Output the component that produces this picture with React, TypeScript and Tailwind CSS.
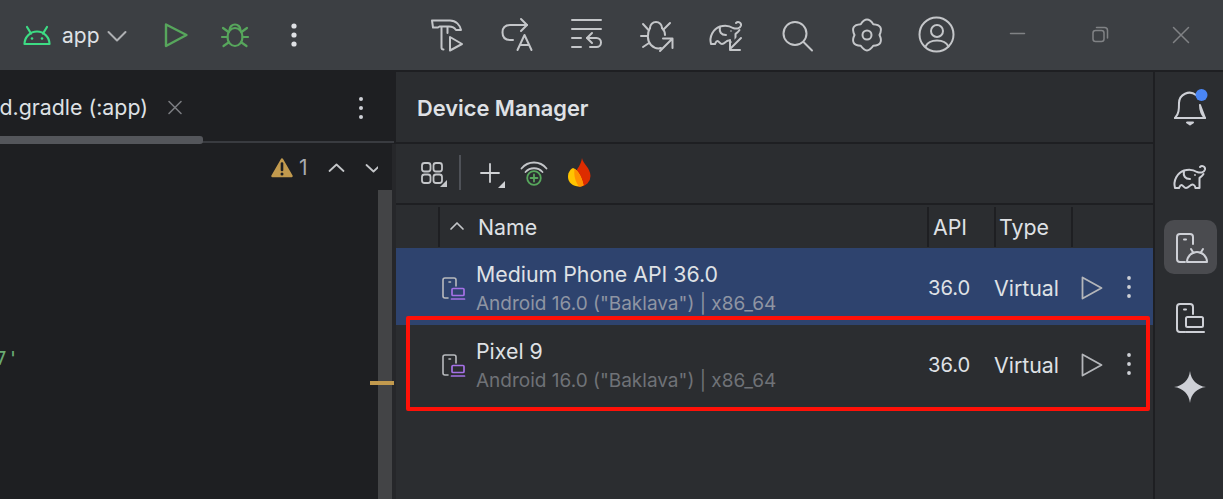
import React from "react";

const Svg = ({ children, stroke = "#c4c6c9", sw = 2, className = "" }: { children: React.ReactNode; stroke?: string; sw?: number; className?: string }) => (
  <svg width="36" height="36" viewBox="0 0 36 36" fill="none" stroke={stroke} strokeWidth={sw} strokeLinecap="round" strokeLinejoin="round" className={"block shrink-0 overflow-visible " + className}>
    {children}
  </svg>
);

const ELEPHANT = "M2 24C0 17 4 9 11 6.5C16 5 21 6 24 8C27 9 31 9 32 5.5C32.5 2.500 29 1 27 3M30.500 10C29 12.500 27.500 13 26.500 14V24H22.500C22 21 20 20 18 21C16.500 22 15 24 13 24C11 24 10 21 8.500 21C7 21 6.500 23 6 24H2M11 7C10 12 12 15 17 15";

const Dots = ({ fill = "#ced0d6", r = 2.3, gap = 9 }: { fill?: string; r?: number; gap?: number }) => (
  <Svg stroke="none">
    <circle cx="18" cy={18 - gap} r={r} fill={fill} />
    <circle cx="18" cy="18" r={r} fill={fill} />
    <circle cx="18" cy={18 + gap} r={r} fill={fill} />
  </Svg>
);

const PlayOutline = ({ color = "#b4b6ba" }: { color?: string }) => (
  <Svg stroke={color} sw={1.8}>
    <path d="M8.500 7.500L27.500 18L8.500 28.500Z" />
  </Svg>
);

const PhoneBody = () => (
  <>
    <path d="M13 33H8A3 3 0 0 1 5 30V8A3 3 0 0 1 8 5H18A3 3 0 0 1 21 8V15" />
    <path d="M12 10.500H14" />
  </>
);

const RowDeviceIcon = () => (
  <svg width="24" height="24" viewBox="0 0 24 24" fill="none" strokeLinecap="round" strokeLinejoin="round" className="block shrink-0">
    <path d="M6 21H3A2 2 0 0 1 1 19V3A2 2 0 0 1 3 1H12A2 2 0 0 1 14 3V9" stroke="#b8babd" strokeWidth="1.600" />
    <path d="M7 5H8.500" stroke="#b8babd" strokeWidth="1.600" />
    <rect x="10" y="11.500" width="12" height="7" rx="1" stroke="#a571e6" strokeWidth="1.700" />
    <path d="M9.500 22H22.500" stroke="#a571e6" strokeWidth="1.700" />
  </svg>
);

const DeviceRow = ({ name, selected }: { name: string; selected?: boolean }) => (
  <div className={"flex h-[77px] items-center " + (selected ? "bg-[#2e436e]" : "")}>
    <div className="ml-[46px] mt-[4px] w-[34px]">
      <RowDeviceIcon />
    </div>
    <div className="flex w-[452px] flex-col pt-[4px]">
      <span className="text-[21.330px] leading-[26px] text-[#dfe1e5]">{name}</span>
      <span className={"mt-[5px] text-[19px] leading-[24px] " + (selected ? "text-[#8f95a3]" : "text-[#6f7277]")}>
        Android 16.0 ("Baklava") | x86_64
      </span>
    </div>
    <span className="mt-[4px] w-[66px] text-[20.200px] text-[#dfe1e5]">36.0</span>
    <span className="mt-[4px] w-[80px] text-[21.330px] text-[#dfe1e5]">Virtual</span>
    <div className="mt-[2px]">
      <PlayOutline />
    </div>
    <div className="ml-[1px]">
      <Dots r={1.900} />
    </div>
  </div>
);

const HeaderSep = () => <div className="h-[40px] w-[2px] shrink-0 bg-[#1e1f22]" />;

export default function App() {
  return (
    <div className="relative flex h-[499px] w-[1223px] flex-col overflow-hidden bg-[#2b2d30] font-['Inter',sans-serif]">
      {/* Title bar */}
      <header className="flex h-[70px] shrink-0 items-center bg-[#3c3f43]">
        <div className="ml-[19px]">
          <Svg stroke="#3ddc84" sw={2.200}>
            <path d="M5.500 27A12.500 12.500 0 0 1 30.500 27Z" />
            <path d="M8 10L12 16.500M28 10L24 16.500" />
            <circle cx="13" cy="21.500" r="1.300" fill="#3ddc84" stroke="none" />
            <circle cx="23" cy="21.500" r="1.300" fill="#3ddc84" stroke="none" />
          </Svg>
        </div>
        <span className="ml-[7px] w-[37px] text-[21px] leading-none text-[#dfe1e5]">app</span>
        <div>
          <Svg stroke="#aeb0b3" sw={2}>
            <path d="M9.500 15L18 23.500L26.500 15" />
          </Svg>
        </div>
        <div className="ml-[23px]">
          <Svg stroke="#57a65c" sw={2.400}>
            <path d="M8 7.500L28.500 18L8 29Z" />
          </Svg>
        </div>
        <div className="ml-[23px]">
          <Svg stroke="#57a65c" sw={2.200}>
            <ellipse cx="18" cy="20" rx="7.500" ry="9" />
            <path d="M12.500 13A5.500 5.500 0 0 1 23.500 13" />
            <path d="M6 11L11.500 15M30 11L24.500 15M5 20H10.500M31 20H25.500M6.500 29L11.500 25.500M29.500 29L24.500 25.500" />
          </Svg>
        </div>
        <div className="ml-[23px]">
          <Dots fill="#dfe1e5" r={2.600} />
        </div>
        <div className="ml-[116px]">
          <Svg>
            <path d="M4 3.500H22C28 3.500 32 8 33 13H28C26.500 10.500 24 9.500 21 9.500H11.500L10 10.500H5Z" />
            <path d="M13.500 10V30.500A2 2 0 0 0 15.500 32.500M19.500 10V16" />
            <path d="M22 20L34 27L22 33.500Z" />
          </Svg>
        </div>
        <div className="ml-[35px]">
          <Svg>
            <path d="M28 8H11C6 8 3.500 11 3.500 15.500C3.500 20 6 23 11 23H14" />
            <path d="M22 2L28 8L22 14" />
            <path d="M18.500 33L25.500 18L32.500 33M21 28H30" />
          </Svg>
        </div>
        <div className="ml-[33px]">
          <Svg>
            <path d="M4 3H33M4 12H33M4 21H13M4 30H13" />
            <path d="M19 21H28.500A4.500 4.500 0 0 1 28.500 30H22" />
            <path d="M24 16L19 21L24 26" />
          </Svg>
        </div>
        <div className="ml-[34px]">
          <Svg>
            <path d="M12 11A6 6 0 0 1 24 11" />
            <path d="M12 11C9 16 9 24 13 28C16 31 20 32 23 31" />
            <path d="M24 11C26 13 27 15 27 18" />
            <path d="M5 7L10.500 13M3 19H9M5 30L11 26M32 6L26 12" />
            <path d="M22 34L34 22M25 21.500H34.500V31" />
          </Svg>
        </div>
        <div className="ml-[34px]">
          <Svg>
            <g transform="translate(1 3)">
              <path d={ELEPHANT} />
              <circle cx="22" cy="11" r="0.800" fill="#c4c6c9" stroke="none" />
            </g>
            <path d="M33 21L21.500 32.500" stroke="#3c3f43" strokeWidth="7" />
            <path d="M33 21L22 32" />
            <path d="M22 23V33H32" />
          </Svg>
        </div>
        <div className="ml-[35px]">
          <Svg>
            <circle cx="16" cy="16.500" r="11.500" />
            <path d="M24.500 25L33 33.500" />
          </Svg>
        </div>
        <div className="ml-[34px]">
          <Svg>
            <path d="M11.750 7.200Q18 -2 24.250 7.200Q35.300 8 30.500 18Q35.300 28 24.250 28.800Q18 38 11.750 28.800Q0.700 28 5.500 18Q0.700 8 11.750 7.200Z" />
            <circle cx="18" cy="18" r="4.500" />
          </Svg>
        </div>
        <div className="ml-[34px]">
          <Svg>
            <circle cx="17.500" cy="17.500" r="17" />
            <circle cx="18" cy="14" r="6" />
            <path d="M6.500 29.500C9 24.500 13 23.500 18 23.500C23 23.500 27 24.500 29.500 29.500" />
          </Svg>
        </div>
        <div className="ml-[45px]">
          <Svg stroke="#808285" sw={1.500}>
            <path d="M10.500 16.500H24.500" />
          </Svg>
        </div>
        <div className="ml-[46px]">
          <Svg stroke="#808285" sw={1.500}>
            <rect x="11" y="13.500" width="11" height="11" rx="2.500" />
            <path d="M14.500 10.500H22.500A3 3 0 0 1 25.500 13.500V21" />
          </Svg>
        </div>
        <div className="ml-[45px]">
          <Svg stroke="#808285" sw={1.500}>
            <path d="M10.500 10.500L25.500 25.500M25.500 10.500L10.500 25.500" />
          </Svg>
        </div>
      </header>

      <main className="relative flex min-h-0 flex-1">
        {/* Editor */}
        <section className="flex w-[396px] shrink-0 flex-col bg-[#1e1f22]">
          <div className="flex h-[66px] shrink-0 items-center pt-[10px]">
            <div className="flex w-[148px] justify-end overflow-hidden whitespace-nowrap text-[21.330px] text-[#dfe1e5]">build.gradle (:app)</div>
            <div className="ml-[9px]">
              <Svg stroke="#7a7c80" sw={1.600}>
                <path d="M12 11.500L24 23.500M24 11.500L12 23.500" />
              </Svg>
            </div>
            <div className="ml-[150px]">
              <Dots r={2} />
            </div>
          </div>
          <div className="flex h-[8px] w-[394px] shrink-0 items-end bg-[linear-gradient(#1e1f22_5px,#393b40_5px,#393b40_7px,#1e1f22_7px)]">
            <div className="h-[8px] w-[203px] rounded-r-[3px] bg-[#54565b]" />
          </div>
          <div className="flex min-h-0 flex-1">
            <div className="flex w-[378px] shrink-0 flex-col overflow-hidden">
              <div className="mt-[6px] flex h-[36px] items-center">
                <svg width="22" height="20" viewBox="0 0 22 20" className="ml-[271px] block shrink-0">
                  <path d="M11 1.500L20.500 18H1.500Z" fill="#c29a4e" stroke="#c29a4e" strokeWidth="2.500" strokeLinejoin="round" />
                  <path d="M11 5.500V12" stroke="#1e1f22" strokeWidth="2.600" strokeLinecap="round" />
                  <circle cx="11" cy="16" r="1.500" fill="#1e1f22" />
                </svg>
                <span className="ml-[6px] text-[21px] text-[#a8abb0]">1</span>
                <div className="ml-[10px]">
                  <Svg stroke="#c4c6c9" sw={1.800}>
                    <path d="M11.500 21L18.500 14.500L25.500 21" />
                  </Svg>
                </div>
                <div className="ml-[1px]">
                  <Svg stroke="#c4c6c9" sw={1.800}>
                    <path d="M11.500 15L18.500 21.500L25.500 15" />
                  </Svg>
                </div>
              </div>
              <div className="-ml-[5px] mt-[158px] font-['DejaVu_Sans_Mono',monospace] text-[20px] leading-[28px] text-[#6aab73]">7'</div>
            </div>
            <div className="mt-[46px] w-[14px] shrink-0 bg-[#434446]" />
            <div className="w-[4px] shrink-0 bg-[#26272a]" />
          </div>
          {/* error-stripe mark on the scrollbar */}
          <div className="absolute left-[370px] top-[311px] h-[4px] w-[24px] bg-[#c29a4e]" />
        </section>

        {/* Device manager panel */}
        <section className="flex min-w-0 flex-1 flex-col border-t-2 border-[#1e1f22] bg-[#2b2d30]">
          <div className="flex h-[72px] shrink-0 items-center border-b-2 border-[#1e1f22] pl-[21px] pt-[3px]">
            <span className="text-[21.800px] font-semibold text-[#dfe1e5]">Device Manager</span>
          </div>
          <div className="flex h-[61px] shrink-0 items-center border-b-2 border-[#1e1f22]">
            <div className="relative mb-[2px] ml-[18px]">
              <Svg stroke="#c4c6c9" sw={1.800}>
                <rect x="8" y="8" width="8.500" height="8.500" rx="2.500" />
                <rect x="19.500" y="8" width="8.500" height="8.500" rx="2.500" />
                <rect x="8" y="19.500" width="8.500" height="8.500" rx="2.500" />
                <rect x="19.500" y="19.500" width="8.500" height="8.500" rx="2.500" />
                <path d="M33 25V32H26Z" fill="#c4c6c9" stroke="none" />
              </Svg>
            </div>
            <div className="mb-[2px] ml-[9px] h-[35px] w-[2px] bg-[#4e5157]" />
            <div className="mb-[2px] ml-[11px]">
              <Svg stroke="#d0d2d5" sw={1.800}>
                <path d="M18 9V27M9 18H27" />
                <path d="M33 26V33H26Z" fill="#d0d2d5" stroke="none" />
              </Svg>
            </div>
            <div className="ml-[8px]">
              <Svg stroke="#c4c6c9" sw={1.800}>
                <path d="M5.500 12.500C12 4.500 24 4.500 30.500 12.500" />
                <path d="M9.500 16C14 11 22 11 26.500 16" />
                <circle cx="18" cy="22" r="6.800" stroke="#57a65c" />
                <path d="M18 18.500V25.500M14.500 22H21.500" stroke="#57a65c" />
              </Svg>
            </div>
            <div className="mb-[4px] ml-[9px]">
              <svg width="36" height="36" viewBox="0 0 36 36" className="block shrink-0">
                <path d="M21 4C22 10 29.500 14 29.500 22A10.500 10.500 0 0 1 19 32.500C12 32.500 11 24 14 19C16 15 20 11 21 4Z" fill="#dd2c00" />
                <path d="M12 14C8 16 7 20 7 23C7 28.500 12 32.500 18 32.500C20 32.500 21.500 32 22.500 31C21 25 18 16 12 14Z" fill="#ffc400" />
                <path d="M13.500 15C17.500 17.500 21 24 22.500 31C21 32 20 32.500 18 32.500C15 29 12.500 22 13.500 15Z" fill="#ff9100" />
              </svg>
            </div>
          </div>
          <div className="flex h-[43px] shrink-0 items-center">
            <div className="ml-[42px]"><HeaderSep /></div>
            <Svg stroke="#c4c6c9" sw={1.700} className="-ml-[1px]">
              <path d="M12 20L18 14L24 20" />
            </Svg>
            <span className="ml-[3px] mt-[3px] w-[449px] text-[21.330px] text-[#dfe1e5]">Name</span>
            <HeaderSep />
            <span className="ml-[4px] mt-[3px] w-[61px] text-[21.330px] text-[#dfe1e5]">API</span>
            <HeaderSep />
            <span className="ml-[3px] mt-[3px] w-[72px] text-[21.330px] text-[#dfe1e5]">Type</span>
            <HeaderSep />
          </div>
          <DeviceRow name="Medium Phone API 36.0" selected />
          <DeviceRow name="Pixel 9" />
        </section>

        {/* Right tool strip */}
        <aside className="flex w-[70px] shrink-0 flex-col items-center border-t-2 border-l-2 border-[#1e1f22] bg-[#2b2d30] pl-[2px]">
          <div className="relative flex h-[70px] items-center justify-center">
            <Svg stroke="#ced0d6">
              <path d="M3 29C7 25 7 20 7 14A10.500 10.500 0 0 1 24 6M28 16C28 21 29 25 33 29Z" />
              <path d="M3 29H33" />
              <path d="M15 33.500H21L18 35.500Z" fill="#ced0d6" />
              <circle cx="29.500" cy="6" r="6" fill="#4a86f5" stroke="none" />
            </Svg>
          </div>
          <div className="flex h-[70px] items-center justify-center">
            <Svg stroke="#ced0d6">
              <g transform="translate(1 5)">
                <path d={ELEPHANT} />
                <circle cx="22" cy="11" r="0.900" fill="#ced0d6" stroke="none" />
              </g>
            </Svg>
          </div>
          <div className="flex h-[70px] items-center justify-center">
            <div className="flex h-[54px] w-[53px] items-center justify-center rounded-[10px] bg-[#4a4b4f]">
              <Svg stroke="#ced0d6">
                <PhoneBody />
                <path d="M15 33A10 10 0 0 1 35 33Z" />
                <path d="M19 20L21.500 24M31 20L28.500 24" />
              </Svg>
            </div>
          </div>
          <div className="flex h-[70px] items-center justify-center">
            <Svg stroke="#ced0d6">
              <PhoneBody />
              <rect x="14" y="18" width="17" height="10" rx="1.500" />
              <path d="M14 33H32" />
            </Svg>
          </div>
          <div className="flex h-[70px] items-center justify-center">
            <Svg stroke="none">
              <path d="M18 2C19 11 25 17 34 18C25 19 19 25 18 34C17 25 11 19 2 18C11 17 17 11 18 2Z" fill="#ced0d6" />
            </Svg>
          </div>
        </aside>
      </main>

      {/* Red annotation drawn over the screenshot */}
      <div className="absolute left-[406px] top-[316px] h-[95px] w-[744px] rounded-[2px] border-4 border-[#ff1108]" />
    </div>
  );
}
